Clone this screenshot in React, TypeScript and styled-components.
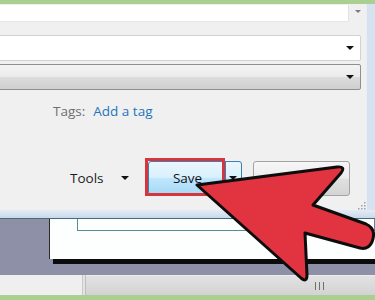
import React from "react"
import styled, { createGlobalStyle } from "styled-components"

const GlobalStyle = createGlobalStyle`
  html, body {
    margin: 0;
    padding: 0;
    background: #f0f0f0;
  }
  * {
    box-sizing: border-box;
  }
`

const Screen = styled.div`
  position: relative;
  width: 375px;
  height: 300px;
  overflow: hidden;
  display: flex;
  flex-direction: column;
  font-family: "Open Sans", "Noto Sans", sans-serif;
  font-size: 13.5px;
`

const GreenStrip = styled.div<{ $h: number }>`
  height: ${p => p.$h}px;
  flex-shrink: 0;
  background: #a9cf91;
`

const WindowArea = styled.div`
  height: 206px;
  display: flex;
  flex-shrink: 0;
`

const Dialog = styled.div`
  flex: 1;
  background: #f0f0f0;
  display: flex;
  flex-direction: column;
  padding-top: 1px;
`

const Frame = styled.div`
  width: 9px;
  background: #d6e2ef;
  border-left: 1px solid #e8eef6;
`

const ListRow = styled.div`
  display: flex;
  height: 17px;
`

const ListField = styled.div`
  flex: 1;
  background: #fff;
  border-right: 1px solid #e2e2e2;
  border-bottom: 1px solid #e6e6e6;
`

const ScrollArrow = styled.div`
  width: 17px;
  display: flex;
  justify-content: center;
  padding-top: 5px;
`

const Caret = styled.span<{ $color: string; $w: number; $h: number }>`
  display: inline-block;
  width: 0;
  height: 0;
  border-left: ${p => p.$w / 2}px solid transparent;
  border-right: ${p => p.$w / 2}px solid transparent;
  border-top: ${p => p.$h}px solid ${p => p.$color};
`

const Combo = styled.div<{ $variant: "edit" | "button"; $top: number }>`
  margin-top: ${p => p.$top}px;
  margin-left: -2px;
  margin-right: 5px;
  height: 26px;
  display: flex;
  align-items: center;
  justify-content: flex-end;
  padding-right: 6px;
  border: 1px solid ${p => (p.$variant === "edit" ? "#d2d2d2" : "#8f8f8f")};
  border-radius: 2px;
  background: ${p =>
    p.$variant === "edit"
      ? "#fff"
      : "linear-gradient(#f3f3f3 0%, #ebebeb 48%, #dcdcdc 52%, #cfcfcf 100%)"};
`

const TagsLine = styled.div`
  margin-top: 13px;
  line-height: 16px;
  padding-left: 53px;
  display: flex;
  gap: 8px;
`

const TagsLabel = styled.span`
  color: #6e6e6e;
`

const TagsLink = styled.span`
  color: #1f74bf;
`

const ButtonRow = styled.div`
  margin-top: 40px;
  height: 38px;
  display: flex;
  align-items: center;
  padding-left: 70px;
`

const ToolsLabel = styled.span`
  color: #1c1c1c;
  margin-right: 17px;
`

const SplitWrap = styled.div`
  position: relative;
  margin-left: 19px;
`

const SplitButton = styled.div`
  width: 94px;
  height: 34px;
  display: flex;
  border: 1px solid #3c7fb1;
  border-radius: 3px;
  background: linear-gradient(#eaf6fd 0%, #d9f0fc 48%, #bee6fd 52%, #a7d9f5 100%);
  color: #111;
`

const SplitMain = styled.div`
  width: 76px;
  display: flex;
  align-items: center;
  justify-content: center;
  padding-left: 2px;
`

const SplitDrop = styled.div`
  flex: 1;
  display: flex;
  align-items: center;
  justify-content: center;
  border-left: 1px solid #3c7fb1;
`

const Highlight = styled.div`
  position: absolute;
  left: -3px;
  top: -3px;
  width: 80px;
  height: 38px;
  border: 3px solid #d6353e;
`

const PlainButton = styled.div`
  margin-left: 11px;
  width: 97px;
  height: 35px;
  border: 1px solid #a3a3a3;
  border-radius: 3px;
  background: linear-gradient(#f6f6f6 0%, #ededed 48%, #e0e0e0 52%, #d4d4d4 100%);
`

const Grip = styled.svg`
  margin-top: auto;
  align-self: flex-end;
  display: block;
`

const Band = styled.div`
  height: 9px;
  flex-shrink: 0;
  background: linear-gradient(#e4edf6, #c8d9eb);
  border-bottom: 1px solid #3f6f79;
`

const Desktop = styled.div`
  height: 56px;
  flex-shrink: 0;
  background: #8d90a6;
  padding-left: 49px;
`

const PageBox = styled.div`
  height: 40px;
  background: #fdfefe;
  border-left: 1px solid #2b2b2b;
  box-shadow: 4px 5px 0 #0c0c0c;
  padding-left: 27px;
`

const InnerRect = styled.div`
  height: 12px;
  border: 1px solid #5a8c95;
  border-top: none;
`

const Scrollbar = styled.div`
  height: 20px;
  flex-shrink: 0;
  display: flex;
  background: #e4e4e4;
`

const ScrollLeft = styled.div`
  width: 83px;
  background: #efefef;
  border-right: 1px solid #c8c8c8;
`

const ScrollThumb = styled.div`
  flex: 1;
  margin-left: 2px;
  background: linear-gradient(#e2e2e2, #d3d3d3);
  border-top: 1px solid #ececec;
  border-left: 1px solid #bdbdbd;
  display: flex;
  align-items: center;
  gap: 3px;
  padding-left: 229px;
`

const GripLine = styled.span`
  width: 1px;
  height: 8px;
  background: #6f6f6f;
`

const ArrowOverlay = styled.svg`
  position: absolute;
  left: 0;
  top: 0;
  pointer-events: none;
`

const App: React.FC = () => {
  return (
    <Screen>
      <GlobalStyle />
      <GreenStrip $h={4} />
      <WindowArea>
        <Dialog>
          <ListRow>
            <ListField />
            <ScrollArrow>
              <Caret $color="#7a7a7a" $w={7} $h={3} />
            </ScrollArrow>
          </ListRow>

          <Combo $variant="edit" $top={13}>
            <Caret $color="#111" $w={8} $h={4} />
          </Combo>
          <Combo $variant="button" $top={3}>
            <Caret $color="#111" $w={8} $h={4} />
          </Combo>

          <TagsLine>
            <TagsLabel>Tags:</TagsLabel>
            <TagsLink>Add a tag</TagsLink>
          </TagsLine>

          <ButtonRow>
            <ToolsLabel>Tools</ToolsLabel>
            <Caret $color="#111" $w={8} $h={4} />
            <SplitWrap>
              <SplitButton>
                <SplitMain>Save</SplitMain>
                <SplitDrop>
                  <Caret $color="#111" $w={8} $h={4} />
                </SplitDrop>
              </SplitButton>
              <Highlight />
            </SplitWrap>
            <PlainButton />
          </ButtonRow>

          <Grip width="9" height="8" viewBox="0 0 9 8">
            {[
              [7, 1],
              [4, 4],
              [7, 4],
              [1, 7],
              [4, 7],
              [7, 7],
            ].map(([x, y], i) => (
              <rect key={i} x={x} y={y - 1} width="1.5" height="1.5" fill="#9aa3ad" />
            ))}
          </Grip>
        </Dialog>
        <Frame />
      </WindowArea>

      <Band />
      <Desktop>
        <PageBox>
          <InnerRect />
        </PageBox>
      </Desktop>

      <Scrollbar>
        <ScrollLeft />
        <ScrollThumb>
          <GripLine />
          <GripLine />
          <GripLine />
        </ScrollThumb>
      </Scrollbar>
      <GreenStrip $h={5} />

      <ArrowOverlay width="375" height="300" viewBox="0 0 375 300">
        <path
          d="M197,185 L337,167 Q346,166 341,173 L313,205 L366,224 Q377,229 372,242 Q368,250 360,248 L305,233 L307,275 Q307,283 301,278 Z"
          fill="#e23340"
          stroke="#0d0d0d"
          strokeWidth="3"
          strokeLinejoin="round"
        />
      </ArrowOverlay>
    </Screen>
  )
}

export default App
